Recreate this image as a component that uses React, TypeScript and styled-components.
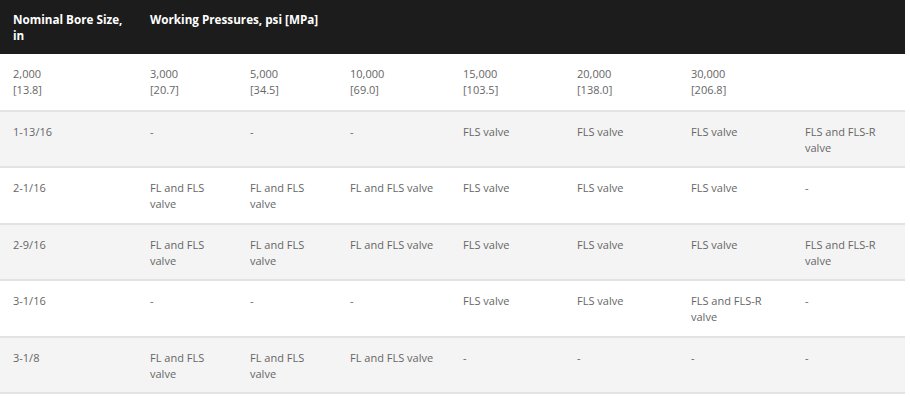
import React from "react";
import styled, { createGlobalStyle } from "styled-components";

const Global = createGlobalStyle`
  html, body { margin: 0; padding: 0; background: #fff; }
  body { font-family: "Open Sans", "Liberation Sans", sans-serif; }
`;

const Table = styled.table`
  width: 905px;
  border-collapse: collapse;
  table-layout: fixed;
  font-family: "Open Sans", "Liberation Sans", sans-serif;
`;

const HeadRow = styled.tr`
  background: #1c1c1c;
`;

const Th = styled.th`
  color: #fff;
  font-size: 11.7px;
  font-weight: 700;
  line-height: 16px;
  text-align: left;
  vertical-align: top;
  padding: 11px 8px 0 13px;
  height: 54px;
  box-sizing: border-box;
`;

const Row = styled.tr<{ $shade: boolean }>`
  background: ${(p) => (p.$shade ? "#f4f4f4" : "#ffffff")};
  border-bottom: 2px solid #e3e3e3;
`;

const Td = styled.td`
  color: #666;
  font-size: 11px;
  line-height: 16px;
  text-align: left;
  vertical-align: top;
  padding: 12px 13px 0;
  height: 56.5px;
  box-sizing: border-box;
`;

const widths = [137, 100, 100, 113, 114, 114, 114, 113];

const pressures = [
  ["2,000", "[13.8]"],
  ["3,000", "[20.7]"],
  ["5,000", "[34.5]"],
  ["10,000", "[69.0]"],
  ["15,000", "[103.5]"],
  ["20,000", "[138.0]"],
  ["30,000", "[206.8]"],
  null,
];

const rows: string[][] = [
  ["1-13/16", "-", "-", "-", "FLS valve", "FLS valve", "FLS valve", "FLS and FLS-R valve"],
  ["2-1/16", "FL and FLS valve", "FL and FLS valve", "FL and FLS valve", "FLS valve", "FLS valve", "FLS valve", "-"],
  ["2-9/16", "FL and FLS valve", "FL and FLS valve", "FL and FLS valve", "FLS valve", "FLS valve", "FLS valve", "FLS and FLS-R valve"],
  ["3-1/16", "-", "-", "-", "FLS valve", "FLS valve", "FLS and FLS-R valve", "-"],
  ["3-1/8", "FL and FLS valve", "FL and FLS valve", "FL and FLS valve", "-", "-", "-", "-"],
];

export default function App() {
  return (
    <>
      <Global />
      <Table>
        <colgroup>
          {widths.map((w, i) => (
            <col key={i} style={{ width: w }} />
          ))}
        </colgroup>
        <thead>
          <HeadRow>
            <Th>Nominal Bore Size, in</Th>
            <Th colSpan={7}>Working Pressures, psi [MPa]</Th>
          </HeadRow>
        </thead>
        <tbody>
          <Row $shade={false}>
            {pressures.map((p, i) => (
              <Td key={i}>
                {p ? (
                  <>
                    {p[0]}
                    <br />
                    {p[1]}
                  </>
                ) : null}
              </Td>
            ))}
          </Row>
          {rows.map((r, ri) => (
            <Row key={ri} $shade={ri % 2 === 0}>
              {r.map((c, ci) => (
                <Td key={ci}>{c}</Td>
              ))}
            </Row>
          ))}
        </tbody>
      </Table>
    </>
  );
}
